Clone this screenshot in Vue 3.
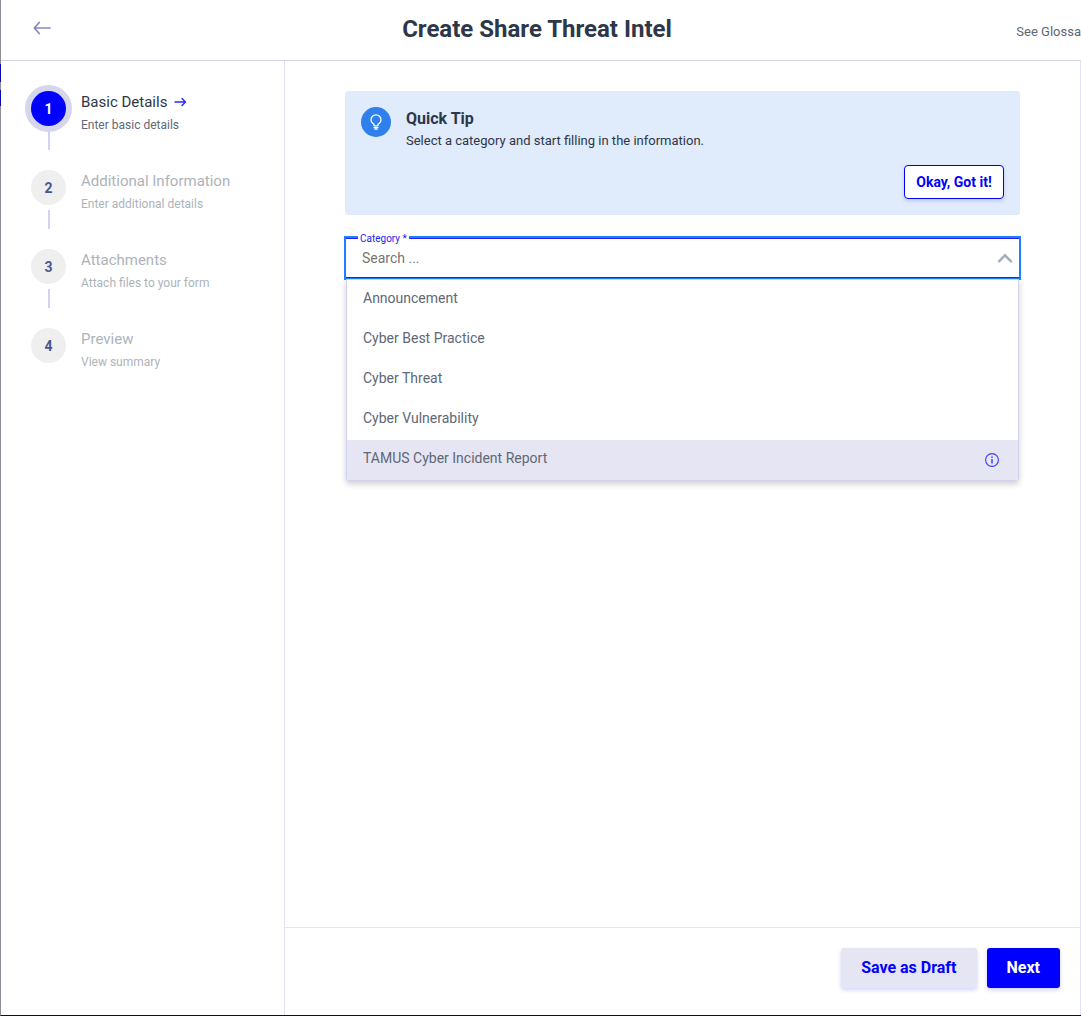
<script setup>
import { ref } from 'vue'

const steps = [
  { title: 'Basic Details', hint: 'Enter basic details' },
  { title: 'Additional Information', hint: 'Enter additional details' },
  { title: 'Attachments', hint: 'Attach files to your form' },
  { title: 'Preview', hint: 'View summary' },
]
const current = ref(0)

const categories = [
  'Announcement',
  'Cyber Best Practice',
  'Cyber Threat',
  'Cyber Vulnerability',
  'TAMUS Cyber Incident Report',
]
const highlighted = ref(4)
const query = ref('')
</script>

<template>
  <div class="page">
    <header class="header">
      <button class="back" type="button" aria-label="Back">
        <svg width="18" height="14" viewBox="0 0 18 14" fill="none" stroke="#8488c0" stroke-width="1.7" stroke-linecap="round" stroke-linejoin="round">
          <path d="M17 7H1.500M6.300 1.500L1.300 7l5 5.500" />
        </svg>
      </button>
      <h1>Create Share Threat Intel</h1>
      <a class="glossary" href="#">See Glossa</a>
    </header>

    <div class="body">
      <nav class="sidebar" aria-label="Steps">
        <ol class="steps">
          <li v-for="(step, i) in steps" :key="step.title" class="step" :class="{ active: i === current }">
            <div class="track">
              <span class="bullet">{{ i + 1 }}</span>
              <span v-if="i < steps.length - 1" class="line"></span>
            </div>
            <div class="labels">
              <div class="step-title">
                <span>{{ step.title }}</span>
                <svg v-if="i === current" width="13" height="10" viewBox="0 0 13 10" fill="none" stroke="#2a2aff" stroke-width="1.4" stroke-linecap="round" stroke-linejoin="round">
                  <path d="M1 5h10.500M8 1.400L11.500 5 8 8.600" />
                </svg>
              </div>
              <div class="step-hint">{{ step.hint }}</div>
            </div>
          </li>
        </ol>
      </nav>

      <main class="main">
        <div class="content">
          <section class="tip">
            <div class="tip-top">
              <span class="tip-icon">
                <svg width="12" height="16" viewBox="0 0 12 16" fill="none" stroke="#fff" stroke-width="1.200" stroke-linejoin="round">
                  <path d="M4 11.800V10.200C2.300 9.200 1 7.700 1 5.800a5 5 0 0 1 10 0C11 7.700 9.700 9.200 8 10.200v1.600z" />
                  <path d="M3.600 13.600h4.800M4.400 15.200h3.200" />
                </svg>
              </span>
              <div class="tip-text">
                <h2>Quick Tip</h2>
                <p>Select a category and start filling in the information.</p>
              </div>
            </div>
            <button class="got-it" type="button">Okay, Got it!</button>
          </section>

          <div class="field">
            <label for="category">Category *</label>
            <input id="category" v-model="query" type="text" placeholder="Search ..." role="combobox" aria-expanded="true" aria-controls="category-list" autocomplete="off" />
            <svg class="caret" width="16" height="10" viewBox="0 0 16 10" fill="none" stroke="#a3acb9" stroke-width="2.400" stroke-linecap="round">
              <path d="M2 8.300L8 2.300l6 6" />
            </svg>
            <ul id="category-list" class="menu" role="listbox">
              <li v-for="(name, i) in categories" :key="name" role="option" :aria-selected="i === highlighted" :class="{ highlighted: i === highlighted }">
                <span>{{ name }}</span>
                <svg v-if="i === highlighted" width="14" height="14" viewBox="0 0 14 14" fill="none" stroke="#3a3aff">
                  <circle cx="7" cy="7" r="6.400" stroke-width="1.100" />
                  <path d="M7 6v4.600M7 3.600v1.300" stroke-width="1.400" />
                </svg>
              </li>
            </ul>
          </div>
        </div>

        <footer class="footer">
          <button class="draft" type="button">Save as Draft</button>
          <button class="next" type="button">Next</button>
        </footer>
      </main>
    </div>
  </div>
</template>

<style>
body {
  margin: 0;
  background: #fff;
}
</style>

<style scoped>
* {
  box-sizing: border-box;
}
.page {
  position: relative;
  display: flex;
  flex-direction: column;
  min-height: 100vh;
  border-left: 1px solid #8f8e98;
  border-bottom: 1px solid #111;
  font-family: Roboto, "Liberation Sans", sans-serif;
  color: #2d3748;
}
.page::before {
  content: "";
  position: absolute;
  left: -1px;
  top: 64px;
  width: 1px;
  height: 42px;
  background: linear-gradient(#0a0ab4 18px, #8f8e98 18px, #8f8e98 26px, #0a0ab4 26px);
}
.header {
  display: grid;
  grid-template-columns: 1fr auto 1fr;
  align-items: center;
  height: 61px;
  padding-left: 32px;
  border-bottom: 1px solid #d5d3ea;
}
.back {
  display: flex;
  justify-self: start;
  padding: 0;
  margin-bottom: 4px;
  border: 0;
  background: none;
}
h1 {
  margin: 0 40px 2px 0;
  font-size: 24px;
  line-height: 32px;
  font-weight: 700;
}
.glossary {
  justify-self: end;
  padding-top: 4px;
  font-size: 13px;
  line-height: 20px;
  color: #5e6673;
  text-decoration: none;
  white-space: nowrap;
}
.body {
  display: flex;
  flex: 1;
}
.sidebar {
  flex: 0 0 284px;
  padding: 30px;
  border-right: 1px solid #e3e1f5;
}
.steps {
  margin: 0;
  padding: 0;
  list-style: none;
}
.step {
  display: flex;
  gap: 15px;
  height: 79px;
}
.track {
  display: flex;
  flex-direction: column;
  align-items: center;
  gap: 5px;
}
.bullet {
  width: 35px;
  height: 35px;
  border-radius: 50%;
  background: #efefef;
  color: #4d5590;
  font-size: 14px;
  line-height: 36px;
  font-weight: 700;
  text-align: center;
}
.line {
  width: 2px;
  height: 19px;
  background: #d2d3ec;
}
.step-title {
  display: flex;
  align-items: center;
  gap: 7px;
  font-size: 15px;
  line-height: 22px;
  color: #adb3ba;
}
.step-hint {
  padding-top: 3px;
  font-size: 12px;
  line-height: 18px;
  color: #adb3ba;
}
.active .bullet {
  background: #0000ff;
  color: #fff;
  box-shadow: 0 0 0 6px #d5d5ec;
}
.active .step-title {
  color: #2d3748;
}
.active .step-hint {
  color: #5e6877;
}
.main {
  display: flex;
  flex: 1;
  flex-direction: column;
  border-right: 1px solid #e3e1f5;
}
.content {
  flex: 1;
  padding: 30px 60px;
}
.tip {
  display: flex;
  flex-direction: column;
  justify-content: space-between;
  min-height: 124px;
  padding: 16px;
  border-radius: 3px;
  background: #e0ebfc;
}
.tip-top {
  display: flex;
  gap: 15px;
}
.tip-icon {
  display: flex;
  align-items: center;
  justify-content: center;
  width: 30px;
  height: 30px;
  border-radius: 50%;
  background: #2f80ed;
}
.tip-text {
  padding-top: 1px;
}
h2 {
  margin: 0;
  font-size: 16px;
  line-height: 22px;
  font-weight: 700;
}
p {
  margin: 0;
  font-size: 13px;
  line-height: 22px;
}
.got-it {
  align-self: flex-end;
  height: 34px;
  width: 100px;
  padding: 0;
  border: 1px solid #0000ff;
  border-radius: 4px;
  background: #fff;
  box-shadow: 0 2px 4px rgba(0, 0, 255, 0.14);
  color: #0000ff;
  font: 700 14px/20px Roboto, "Liberation Sans", sans-serif;
}
.field {
  position: relative;
  margin: 23px 1px 0;
}
label {
  position: absolute;
  left: 12px;
  top: -6px;
  padding: 0 2px;
  background: #fff;
  color: #2222ee;
  font-size: 10px;
  line-height: 14px;
}
input {
  display: block;
  width: 100%;
  height: 40px;
  padding: 0 48px 0 16px;
  border: 0 solid #2222ee;
  border-width: 1px 0;
  outline: 2px solid #1f80ff;
  background: #fff;
  color: #2d3748;
  font: 400 14px/20px Roboto, "Liberation Sans", sans-serif;
}
input::placeholder {
  color: #757575;
  opacity: 1;
}
.caret {
  position: absolute;
  right: 6px;
  top: 15px;
}
.menu {
  position: absolute;
  top: 41px;
  left: 0;
  right: 0;
  margin: 0;
  padding: 0;
  list-style: none;
  border: 1px solid #d2d2ee;
  border-radius: 0 0 3px 3px;
  background: #fff;
  box-shadow: 0 3px 6px rgba(0, 0, 0, 0.2);
}
.menu li {
  display: flex;
  align-items: center;
  justify-content: space-between;
  height: 40px;
  padding: 0 19px 0 16px;
  font-size: 14px;
  line-height: 20px;
  color: #5e6877;
}
.menu li span {
  padding-bottom: 4px;
}
.menu .highlighted {
  background: #e6e5f3;
}
.footer {
  display: flex;
  justify-content: flex-end;
  gap: 10px;
  height: 88px;
  padding: 20px;
  border-top: 1px solid #e5e4f0;
}
.footer button {
  height: 40px;
  padding: 0 20px;
  border: 0;
  border-radius: 3px;
  font: 700 16px/20px Roboto, "Liberation Sans", sans-serif;
  box-shadow: 0 2px 4px rgba(0, 0, 255, 0.18);
}
.draft {
  background: #e6e5f3;
  color: #0000ff;
}
.next {
  background: #0000ff;
  color: #fff;
}
</style>
